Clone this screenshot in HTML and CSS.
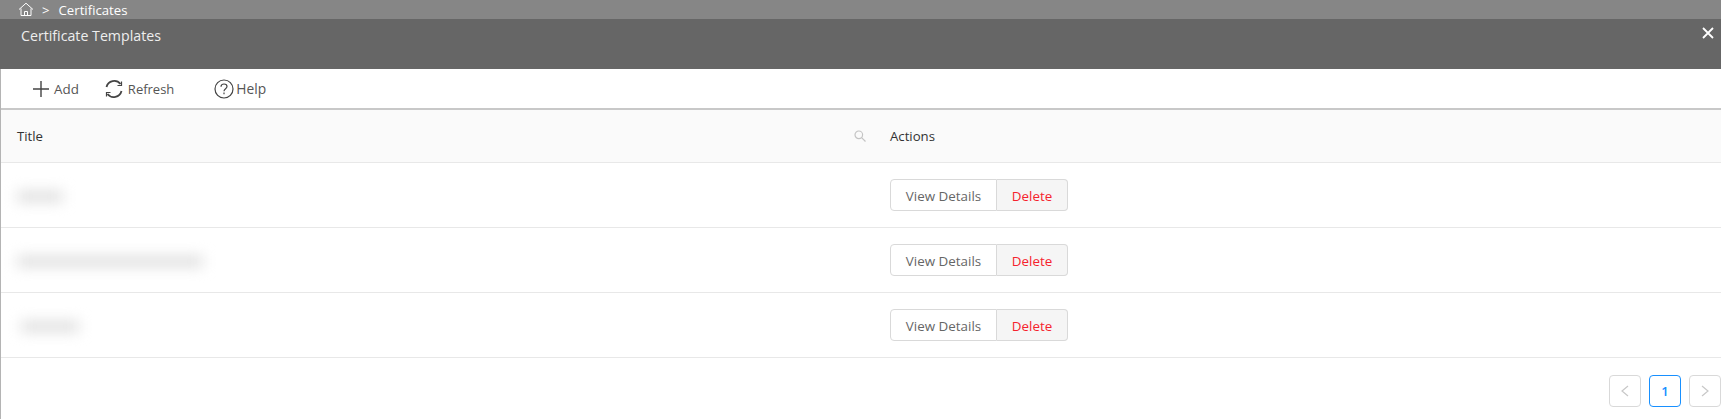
FILE: index.html
```html
<!DOCTYPE html>
<html lang="en">
<head>
    <meta charset="UTF-8">
    <meta name="viewport" content="width=device-width, initial-scale=1.0">
    <title>Certificate Templates</title>
    <link rel="stylesheet" href="styles.css">
</head>
<body>

<div class="breadcrumb">
    <svg class="home-icon" width="16" height="15" viewBox="0 0 16 15" fill="none" stroke="currentColor" stroke-width="1">
        <path d="M1 7.5 8 1.2 15 7.5"/>
        <path d="M3 6.5V13.5H13V6.5"/>
        <path d="M6.5 13.5V9.5H9.5V13.5"/>
    </svg>
    <span class="crumb-sep">&gt;</span>
    <span>Certificates</span>
</div>

<div class="panel-header">
    <span>Certificate Templates</span>
    <svg class="close-icon" width="12" height="12" viewBox="0 0 12 12" stroke="currentColor" stroke-width="1.8">
        <path d="M1 1 11 11M11 1 1 11"/>
    </svg>
</div>

<div class="content">
    <div class="toolbar">
        <div class="tool tool-add">
            <svg width="16" height="16" viewBox="0 0 16 16" stroke="#444" stroke-width="1.4">
                <path d="M8 0V16M0 8H16"/>
            </svg>
            <span>Add</span>
        </div>
        <div class="tool tool-refresh">
            <svg width="20" height="20" viewBox="0 0 20 20" fill="none" stroke="#444" stroke-width="1.8">
                <path d="M2.5 8A8 8 0 0 1 16.5 5"/>
                <path d="M17.5 12A8 8 0 0 1 3.5 15"/>
                <path d="M17.5 2.5V6.5H13.5" stroke-width="1.2"/>
                <path d="M2.5 17.5V13.5H6.5" stroke-width="1.2"/>
            </svg>
            <span>Refresh</span>
        </div>
        <div class="tool tool-help">
            <svg width="20" height="20" viewBox="0 0 20 20" fill="none" stroke="#444" stroke-width="1.2">
                <circle cx="10" cy="10" r="9"/>
                <path d="M7 7.8C7 5.8 8.4 5 10 5S13 6 13 7.6C13 9.6 10 9.8 10 12.2"/>
                <path d="M10 13.6V15.2"/>
            </svg>
            <span>Help</span>
        </div>
    </div>

    <div class="row row-head">
        <div class="cell title-head">
            <span>Title</span>
            <svg class="search-icon" width="12" height="12" viewBox="0 0 12 12" fill="none" stroke="#c4c4c4" stroke-width="1.2">
                <circle cx="4.8" cy="4.8" r="3.8"/>
                <path d="M7.6 7.6 11.5 11.5"/>
            </svg>
        </div>
        <div class="cell">Actions</div>
    </div>

    <div class="row">
        <div class="cell"><div class="blurred blurred-short"></div></div>
        <div class="cell">
            <div class="btn-group">
                <button class="btn">View Details</button>
                <button class="btn btn-delete">Delete</button>
            </div>
        </div>
    </div>
    <div class="row">
        <div class="cell"><div class="blurred blurred-long"></div></div>
        <div class="cell">
            <div class="btn-group">
                <button class="btn">View Details</button>
                <button class="btn btn-delete">Delete</button>
            </div>
        </div>
    </div>
    <div class="row">
        <div class="cell"><div class="blurred blurred-mid"></div></div>
        <div class="cell">
            <div class="btn-group">
                <button class="btn">View Details</button>
                <button class="btn btn-delete">Delete</button>
            </div>
        </div>
    </div>

    <div class="pagination">
        <div class="page-btn">
            <svg width="10" height="12" viewBox="0 0 10 12" fill="none" stroke="#c8c8c8" stroke-width="1.2"><path d="M8 1 2 6 8 11"/></svg>
        </div>
        <div class="page-btn page-active">1</div>
        <div class="page-btn">
            <svg width="10" height="12" viewBox="0 0 10 12" fill="none" stroke="#c8c8c8" stroke-width="1.2"><path d="M2 1 8 6 2 11"/></svg>
        </div>
    </div>
</div>

</body>
</html>
```

FILE: styles.css
```css
body {
    font-family: "Open Sans", "Noto Sans", sans-serif;
    font-size: 13px;
    color: #333;
    background-color: #fff;
    margin: 0;
    height: 419px;
    overflow: hidden;
}
.breadcrumb {
    height: 19px;
    background: #868686;
    color: #fff;
    display: flex;
    align-items: center;
    padding-left: 18px;
    font-size: 13.2px;
}
.crumb-sep {
    margin: 0 9px 0 8px;
}
.panel-header {
    height: 50px;
    box-sizing: border-box;
    background: #666;
    color: #eee;
    display: flex;
    justify-content: space-between;
    align-items: flex-start;
    padding: 7px 7px 0 21px;
    font-size: 14.2px;
}
.close-icon {
    color: #fff;
    margin-top: 1px;
}
.content {
    border-left: 1px solid #b4b4b4;
    height: 350px;
}
.toolbar {
    height: 39px;
    border-bottom: 2px solid #c8c8c8;
    display: flex;
    align-items: center;
    color: #555;
}
.tool {
    display: flex;
    align-items: center;
}
.tool-add {
    margin-left: 32px;
    gap: 5px;
    font-size: 13.4px;
}
.tool-refresh {
    margin-left: 25px;
    gap: 4px;
}
.tool-help {
    margin-left: 40px;
    gap: 2px;
    font-size: 13.8px;
}
.row {
    display: grid;
    grid-template-columns: 873px 1fr;
    height: 64px;
    border-bottom: 1px solid #e8e8e8;
}
.row-head {
    height: 52px;
    background: #fafafa;
    color: #333;
    font-size: 13.2px;
}
.cell {
    display: flex;
    align-items: center;
    padding-left: 16px;
}
.title-head {
    justify-content: space-between;
    padding-right: 8px;
}
.blurred {
    height: 11px;
    margin-top: 3px;
    background: #dedede;
    filter: blur(7px);
}
.blurred-short {
    width: 46px;
}
.blurred-long {
    width: 186px;
}
.blurred-mid {
    width: 58px;
    margin-left: 4px;
}
.btn-group {
    display: flex;
}
.btn {
    font-family: inherit;
    font-size: 13.4px;
    width: 107px;
    height: 32px;
    box-sizing: border-box;
    padding: 1px 0 0;
    border: 1px solid #d9d9d9;
    border-radius: 4px 0 0 4px;
    background: #fff;
    color: #666;
}
.btn-delete {
    width: 71px;
    border-left: 0;
    border-radius: 0 4px 4px 0;
    background: #f5f5f5;
    color: #f5222d;
}
.pagination {
    display: flex;
    justify-content: flex-end;
    gap: 8px;
    padding-top: 17px;
}
.page-btn {
    width: 32px;
    height: 32px;
    box-sizing: border-box;
    border: 1px solid #d9d9d9;
    border-radius: 4px;
    display: flex;
    align-items: center;
    justify-content: center;
}
.page-active {
    border-color: #1890ff;
    color: #1890ff;
    font-weight: 600;
}
```
